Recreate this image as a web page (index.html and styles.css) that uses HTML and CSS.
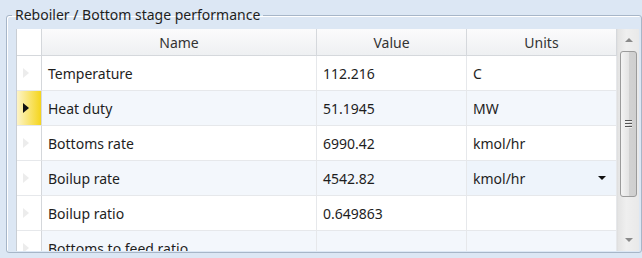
FILE: index.html
```html
<!DOCTYPE html>
<html lang="en">
<head>
  <meta charset="UTF-8" />
  <title>Reboiler / Bottom stage performance</title>
  <link rel="stylesheet" href="styles.css">
</head>
<body>
  <fieldset class="group">
    <legend>Reboiler / Bottom stage performance</legend>
    <div class="grid">
      <div class="table">
        <div class="row head">
          <div class="cell rh"></div>
          <div class="cell">Name</div>
          <div class="cell">Value</div>
          <div class="cell">Units</div>
        </div>
        <div class="row">
          <div class="cell rh"><span class="tri"></span></div>
          <div class="cell">Temperature</div>
          <div class="cell">112.216</div>
          <div class="cell">C</div>
        </div>
        <div class="row alt">
          <div class="cell rh current"><span class="tri"></span></div>
          <div class="cell">Heat duty</div>
          <div class="cell">51.1945</div>
          <div class="cell">MW</div>
        </div>
        <div class="row">
          <div class="cell rh"><span class="tri"></span></div>
          <div class="cell">Bottoms rate</div>
          <div class="cell">6990.42</div>
          <div class="cell">kmol/hr</div>
        </div>
        <div class="row alt">
          <div class="cell rh"><span class="tri"></span></div>
          <div class="cell">Boilup rate</div>
          <div class="cell">4542.82</div>
          <div class="cell combo">kmol/hr<span class="drop"></span></div>
        </div>
        <div class="row">
          <div class="cell rh"><span class="tri"></span></div>
          <div class="cell">Boilup ratio</div>
          <div class="cell">0.649863</div>
          <div class="cell"></div>
        </div>
        <div class="row alt">
          <div class="cell rh"><span class="tri"></span></div>
          <div class="cell">Bottoms to feed ratio</div>
          <div class="cell"></div>
          <div class="cell"></div>
        </div>
      </div>
      <div class="scrollbar">
        <div class="arrow up"></div>
        <div class="thumb"><span class="grip"></span></div>
        <div class="arrow down"></div>
      </div>
    </div>
  </fieldset>
</body>
</html>
```

FILE: styles.css
```css
body {
  margin: 0;
  background: #dce7f4;
  font-family: 'Noto Sans', 'Open Sans', sans-serif;
  font-size: 14px;
  color: #1e1e1e;
}
.group {
  margin: 6px 2px 0 6px;
  padding: 5px 2px 1px 9px;
  border: 1px solid #a7b6c8;
  border-radius: 3px;
  box-shadow: inset 1px 1px 0 #fff;
}
.group legend {
  margin-left: -4px;
  padding: 0 3px;
  line-height: 18px;
  font-size: 14px;
  color: #1e1e1e;
}
.grid {
  display: flex;
  height: 222px;
  border-left: 1px solid #c9ced4;
  background: #fff;
  overflow: hidden;
}
.table {
  width: 600px;
  overflow: hidden;
}
.row {
  display: grid;
  grid-template-columns: 25px 275px 150px 150px;
  height: 35px;
  background: #fff;
}
.row.alt {
  background: #f3f7fc;
}
.cell {
  display: flex;
  align-items: center;
  padding-left: 6px;
  border-right: 1px solid #e6e8eb;
  border-bottom: 1px solid #e6e8eb;
  white-space: nowrap;
  overflow: hidden;
}
.row.head {
  height: 27px;
}
.head .cell {
  justify-content: center;
  padding-left: 0;
  background: linear-gradient(#fbfbfc, #eef0f2);
  border-right: 1px solid #d5d8dc;
  border-bottom: 1px solid #d5d8dc;
  color: #333;
}
.cell.rh {
  padding-left: 6px;
  background: #fff;
  border-right: 1px solid #d4d7db;
}
.tri {
  width: 0;
  height: 0;
  border-top: 5px solid transparent;
  border-bottom: 5px solid transparent;
  border-left: 6px solid #ececec;
}
.rh.current {
  background: linear-gradient(to right, #fdf4c8, #f5d51c);
}
.rh.current .tri {
  border-left-color: #111;
}
.combo {
  justify-content: space-between;
  padding-right: 10px;
  background: #eef4fb;
}
.drop {
  width: 0;
  height: 0;
  border-left: 4px solid transparent;
  border-right: 4px solid transparent;
  border-top: 4px solid #111;
}
.scrollbar {
  width: 21px;
  display: flex;
  flex-direction: column;
  align-items: center;
  background: linear-gradient(to right, #e4e4e4, #efefef 40%, #e9e9e9);
  border-left: 1px solid #e0e0e0;
}
.arrow {
  height: 22px;
  width: 100%;
  display: flex;
  align-items: center;
  justify-content: center;
}
.arrow::after {
  content: "";
  border-left: 4px solid transparent;
  border-right: 4px solid transparent;
}
.arrow.up::after {
  border-bottom: 4px solid #8a8a8a;
}
.arrow.down {
  margin-top: auto;
}
.arrow.down::after {
  border-top: 4px solid #8a8a8a;
}
.thumb {
  width: 17px;
  height: 146px;
  box-sizing: border-box;
  border: 1px solid #9b9b9b;
  border-radius: 3px;
  background: linear-gradient(to right, #f4f4f4, #e4e4e4 50%, #d2d2d2 51%, #cfcfcf);
  display: flex;
  align-items: center;
  justify-content: center;
}
.grip {
  width: 7px;
  height: 8px;
  background: repeating-linear-gradient(#555 0 1px, #f0f0f0 1px 2px, transparent 2px 3px);
}
```
